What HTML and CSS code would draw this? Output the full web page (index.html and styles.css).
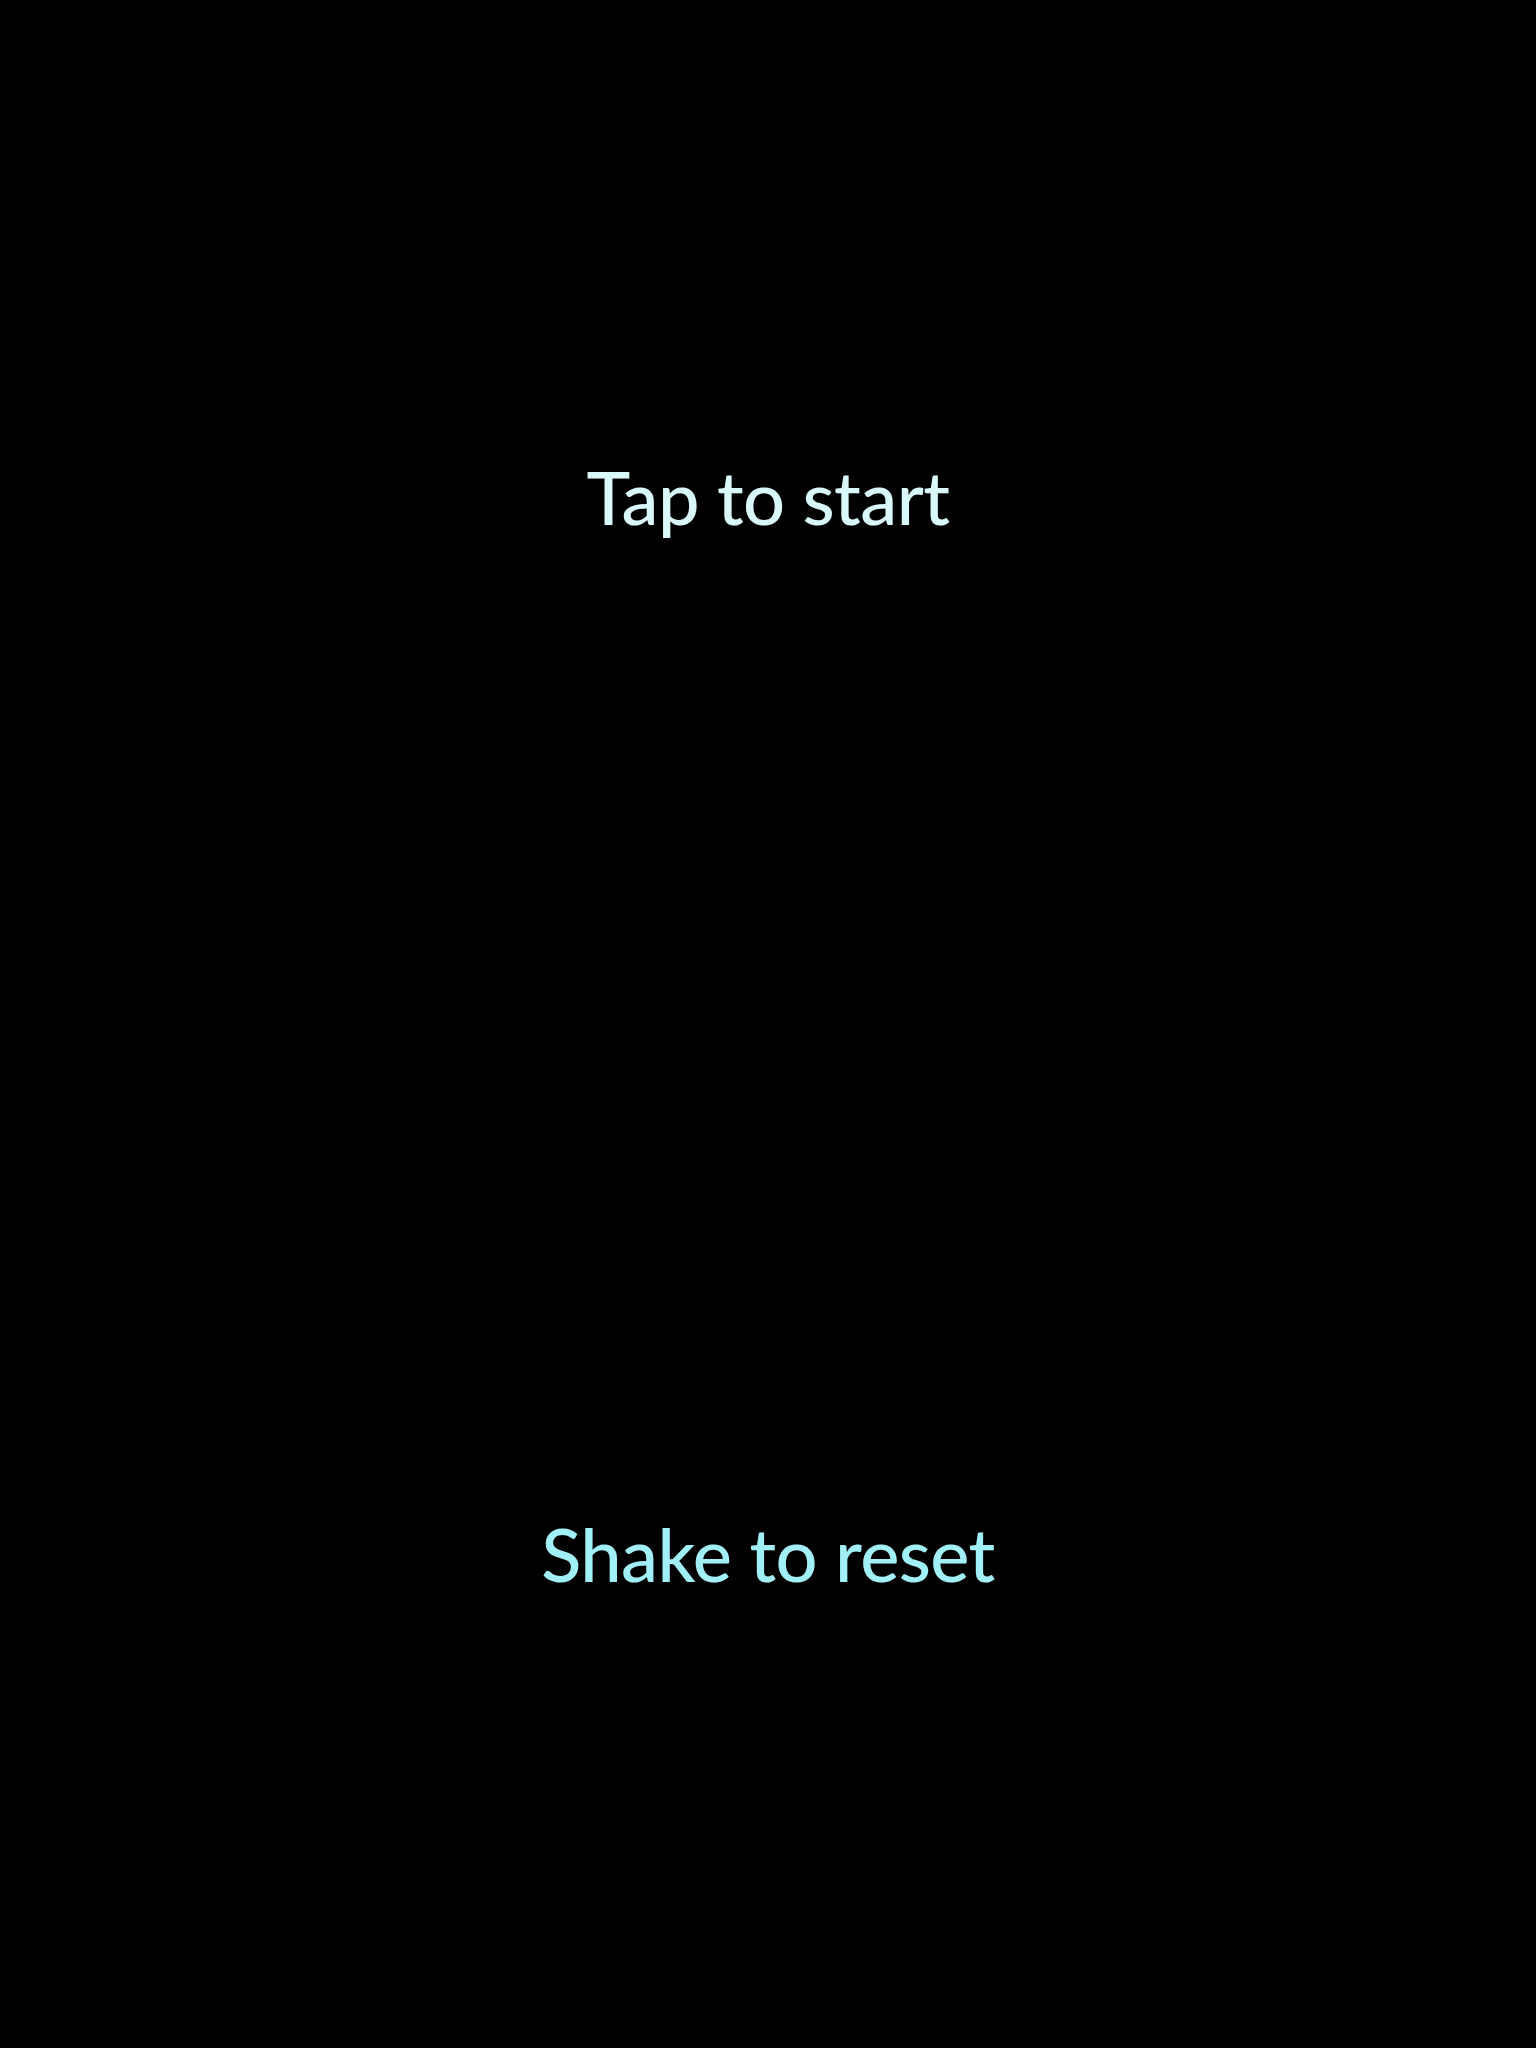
FILE: index.html
```html
<!DOCTYPE html>
<html>
<head>
<meta charset="utf-8">
<link rel="stylesheet" href="styles.css">
</head>
<body>
<main class="screen">
  <div class="prompt prompt-start">Tap to start</div>
  <div class="prompt prompt-reset">Shake to reset</div>
</main>
</body>
</html>
```
FILE: styles.css
```css
html, body {
  margin: 0;
  padding: 0;
  background: #000;
}
.screen {
  width: 1536px;
  height: 2048px;
  display: flex;
  flex-direction: column;
  align-items: center;
  padding-top: 452px;
  box-sizing: border-box;
}
.prompt {
  font-family: Lato, "Open Sans", sans-serif;
  font-size: 74px;
  line-height: 90px;
  font-weight: 500;
  letter-spacing: -0.6px;
}
.prompt-start {
  color: #d8f8fa;
}
.prompt-reset {
  color: #a2f0f7;
  margin-top: 967px;
}
```
